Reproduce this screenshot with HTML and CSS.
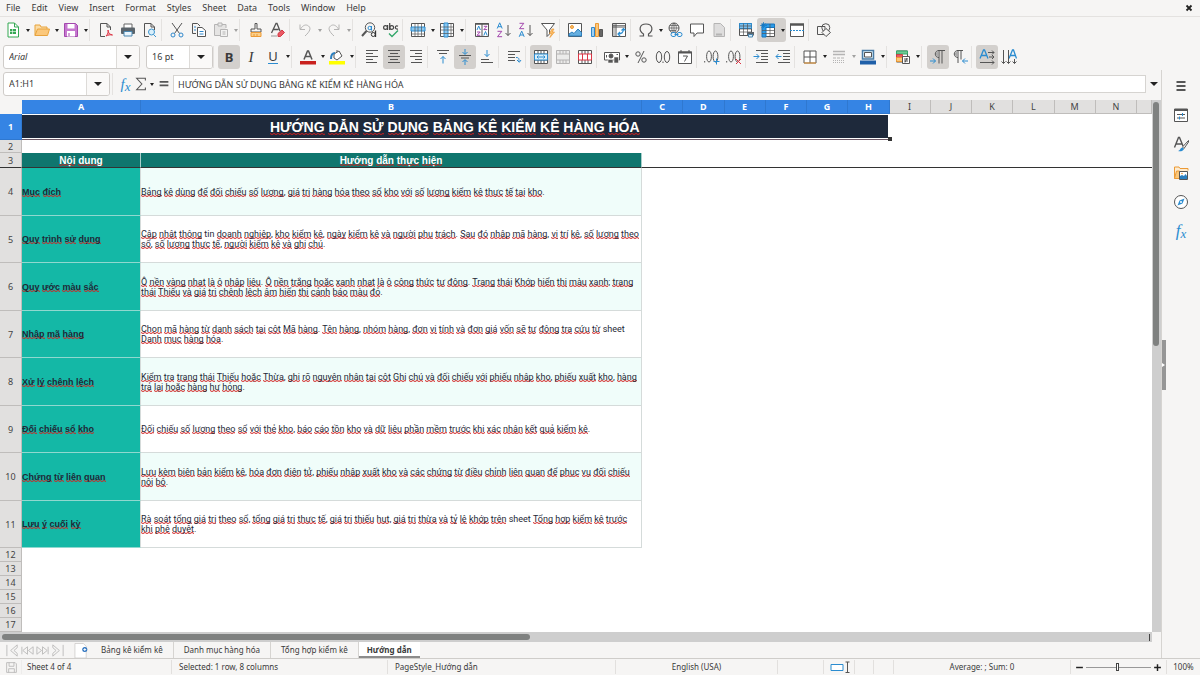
FILE: index.html
```html
<!DOCTYPE html>
<html lang="vi">
<head>
<meta charset="utf-8">
<title>Bảng kê kiểm kê hàng hóa</title>
<link rel="stylesheet" href="styles.css">
</head>
<body>
<header class="menubar">
  <nav class="menus">
    <button>File</button><button>Edit</button><button>View</button><button>Insert</button><button>Format</button><button>Styles</button><button>Sheet</button><button>Data</button><button>Tools</button><button>Window</button><button>Help</button>
  </nav>
  <button class="close" aria-label="Close document"><svg viewBox="0 0 8 8"><path d="M1.5 1.5l5 5M6.5 1.5l-5 5" stroke="#222" stroke-width="1.8"/></svg></button>
</header>

<div class="toolbar" role="toolbar" aria-label="Standard">
  <button class="tool" aria-label="New"><svg viewBox="0 0 16 16"><path d="M3 1h6.500l4 4v10H3z" fill="#fff" stroke="#35a853"/><path d="M9.500 1v4h4" stroke="#35a853"/><path d="M5 7h6v5H5z" fill="#35a853" stroke="none"/><path d="M5 9.500h6M7.500 7v5" stroke="#fff" stroke-width=".6"/></svg></button><button class="arrow" aria-label="New options"></button>
  <button class="tool" aria-label="Open"><svg viewBox="0 0 16 16"><path d="M1 13.500V3h5l1 2h6v2" fill="#fbdca5" stroke="#e8a33d"/><path d="M1 13.500L3.500 7h12l-2 6.500z" fill="#fbc87c" stroke="#e8a33d"/></svg></button><button class="arrow" aria-label="Open options"></button>
  <button class="tool" aria-label="Save"><svg viewBox="0 0 16 16"><path d="M1.500 1.500h11l2 2v11h-13z" fill="#c678cf" stroke="#a347ad"/><path d="M4.500 2h7v4.500h-7zM4 9h8v5.500H4z" fill="#fff" stroke="none"/><path d="M6 11v3" stroke="#a347ad"/></svg></button><button class="arrow" aria-label="Save options"></button>
  <span class="sep"></span>
  <button class="tool" aria-label="Export as PDF"><svg viewBox="0 0 16 16"><path d="M7 14.500H2.500v-13H9l3.500 3.500v3M9 1.500V5h3.500"/><path d="M8 14c2-2 2.500-4 2-6 0 3 2 4.500 4.500 5-2-.5-4.500 0-6.500 1z" stroke="#dc3545" fill="#f7b0b5"/></svg></button>
  <button class="tool" aria-label="Print"><svg viewBox="0 0 16 16"><path d="M4 6V2h8v4" fill="#fff" stroke="#666"/><rect x="1" y="5.500" width="14" height="6.500" rx="1" fill="#5b646b" stroke="none"/><path d="M4 9.500h8V14H4z" fill="#eaf5fd" stroke="#4b87b0"/></svg></button>
  <button class="tool" aria-label="Print preview"><svg viewBox="0 0 16 16"><path d="M7 14.500H2.500v-13H9l3.500 3.500v3M9 1.500V5h3.500"/><circle cx="9.500" cy="10" r="3" fill="#d9effb" stroke="#3d95cf"/><path d="M11.500 12.500l2.500 2.500" stroke="#3d95cf"/></svg></button>
  <span class="sep"></span>
  <button class="tool" aria-label="Cut"><svg viewBox="0 0 16 16"><path d="M3 1l7.500 10.500M13 1L5.500 11.500"/><circle cx="4" cy="13" r="2" stroke="#3088cc"/><circle cx="12" cy="13" r="2" stroke="#3088cc"/></svg></button>
  <button class="tool" aria-label="Copy"><svg viewBox="0 0 16 16"><path d="M5 11.500H1.500v-10h5L9 4"/><path d="M6.500 5.500h4.500l3.500 3v6h-8z" fill="#fff"/><path d="M3 5h2M3 8h2M8.500 9.500h4M8.500 12h4" stroke="#3088cc"/></svg></button>
  <button class="tool faded" aria-label="Paste"><svg viewBox="0 0 16 16"><path d="M7 13.500H1.500v-11H13V6" fill="#ccc"/><path d="M5 1h4v3H5z" fill="#ddd"/><path d="M7.500 7.500h7v7h-7zM9.500 10h3M9.500 12h3" fill="#eee"/></svg></button><button class="arrow faded" aria-label="Paste options"></button>
  <span class="sep"></span>
  <button class="tool" aria-label="Clone formatting"><svg viewBox="0 0 16 16"><path d="M7 1.500h2V7h4v3H3V7h4z"/><path d="M3 10.500h10v4H3z" fill="#fbd08c" stroke="#ec9a35"/><path d="M6 12v2M9 12v2" stroke="#ec9a35"/></svg></button>
  <button class="tool" aria-label="Clear formatting"><svg viewBox="0 0 16 16"><path d="M1.500 11L6 1.500h1L10 9M3.500 7.500h5" stroke-width="1.300"/><path d="M8 11.500L12 8l2.500 2.500-4 4H8z" fill="#ea5964" stroke="#d43a46"/><path d="M1 14h6" stroke="#999"/></svg></button>
  <span class="sep"></span>
  <button class="tool faded" aria-label="Undo"><svg viewBox="0 0 16 16"><path d="M3 2.500v5h5M3.500 7C6 3 9 2 11.500 4s2 5-3.500 10"/></svg></button><button class="arrow faded" aria-label="Undo history"></button>
  <button class="tool faded" aria-label="Redo"><svg viewBox="0 0 16 16"><path d="M13 2.500v5H8M12.500 7C10 3 7 2 4.500 4s-2 5 3.500 10"/></svg></button><button class="arrow faded" aria-label="Redo history"></button>
  <span class="sep"></span>
  <button class="tool" aria-label="Find and replace"><svg viewBox="0 0 16 16"><circle cx="9" cy="5.500" r="4.700"/><path d="M5.500 9L1 14" stroke-width="2"/><circle cx="8.700" cy="6" r="1.700" stroke="#2b8cd0"/><path d="M10.500 4v4.500" stroke="#2b8cd0"/><circle cx="12.300" cy="12.500" r="2" stroke="#333" fill="#f6f5f4"/><path d="M14.500 8.500V15" stroke="#333" stroke-width="1.300"/></svg></button>
  <button class="tool" aria-label="Spelling"><svg viewBox="0 0 16 16"><g stroke="#444" stroke-width="1.200"><circle cx="2.500" cy="5.500" r="1.900"/><path d="M4.600 3v5M6.700 1v7M15 4.200c-3-1.600-4 3.300 0 3"/><circle cx="8.700" cy="5.500" r="1.900"/></g><path d="M6 11.500l3 3L15 8.500" stroke="#35a86b" stroke-width="1.400"/></svg></button>
  <span class="sep"></span>
  <button class="tool" aria-label="Row"><svg viewBox="0 0 16 16"><path d="M1.500 1.500h13v13h-13z" fill="#fff"/><path d="M1 5h14v4H1z" fill="#8cc8f0" stroke="#2b8cd0"/><path d="M5 1.500v13M8 1.500v13M11.500 1.500v13M1 12h14" stroke-width=".7"/></svg></button><button class="arrow" aria-label="Row options"></button>
  <button class="tool" aria-label="Column"><svg viewBox="0 0 16 16"><path d="M1.500 1.500h13v13h-13z" fill="#fff"/><path d="M5 1h4v14H5z" fill="#8cc8f0" stroke="#2b8cd0"/><path d="M1.500 5h13M1.500 8h13M1.500 11.500h13M12 1v14" stroke-width=".7"/></svg></button><button class="arrow" aria-label="Column options"></button>
  <span class="sep"></span>
  <button class="tool" aria-label="Sort"><svg viewBox="0 0 16 16"><path d="M1.500 1.500h13v13h-13zM8 1.500v13" fill="#fff"/><path d="M1 2h14" stroke-width="1.500"/><path d="M3 8l1.700-4 1.700 4M9.800 13.500l1.700-4 1.700 4" stroke="#2b8cd0"/><path d="M3 10h3.200L3 13.300h3.400M9.800 4.300H13L9.800 7.600h3.400" stroke="#a347ad"/></svg></button>
  <button class="tool" aria-label="Sort ascending"><svg viewBox="0 0 16 16"><path d="M1.200 6.500L3.700.8l2.500 5.700M2 4.700h3.400" stroke="#2b8cd0"/><path d="M1.500 9.300h4.300l-4.300 5.400h4.600" stroke="#a347ad"/><path d="M12 3v10.500M9.500 11l2.500 2.500 2.500-2.500"/></svg></button>
  <button class="tool" aria-label="Sort descending"><svg viewBox="0 0 16 16"><path d="M1.200 14.800l2.500-5.700 2.500 5.700M2 13h3.400" stroke="#2b8cd0"/><path d="M1.500 1.300h4.300L1.500 6.700h4.600" stroke="#a347ad"/><path d="M12 3v10.500M9.500 11l2.500 2.500 2.500-2.500"/></svg></button>
  <button class="tool" aria-label="AutoFilter"><svg viewBox="0 0 16 16"><path d="M1.500 1.500h13L9.500 8v4L7 14.500V8z" fill="#fff"/><path d="M12 7l-2.500 4.500h2L10 15.500 14.500 10h-2.300L14 7z" fill="#fbbf6b" stroke="#ec9a35" stroke-width=".7"/></svg></button>
  <span class="sep"></span>
  <button class="tool" aria-label="Insert image"><svg viewBox="0 0 16 16"><path d="M1.500 1.500h13v13h-13z" fill="#fff"/><circle cx="5" cy="5" r="1.500" fill="#fbbf6b" stroke="#ec9a35"/><path d="M2 14v-2l3-2 2 1.500L11 7l3.500 3.500V14z" fill="#65afe0" stroke="#2b7fbf"/></svg></button>
  <button class="tool" aria-label="Insert chart"><svg viewBox="0 0 16 16"><path d="M2.500 5.500h3v9h-3z" fill="#9fd0f2" stroke="#3088cc"/><path d="M6.500 1.500h3v13h-3z" fill="#fbc87c" stroke="#ec9a35"/><path d="M10.500 7.500h3v7h-3z" fill="#666"/></svg></button>
  <button class="tool" aria-label="Insert pivot table"><svg viewBox="0 0 16 16"><path d="M1.500 1.500h13v13h-13zM5 1.500v13M1.500 5h13" fill="#fff"/><path d="M3 2v12M2 3.500h12" stroke-width=".7"/><path d="M12.500 7c0 3-2 5-5.500 5M10.500 8.500l2-2 2 2M9 10l-2 2 2 2" stroke="#2b8cd0" stroke-width="1.200"/></svg></button>
  <span class="sep"></span>
  <button class="tool" aria-label="Special character"><svg viewBox="0 0 16 16"><path d="M1.500 14h4v-2C0 8.500 1.500 2 8 2s8 6.500 2.500 10v2h4" stroke-width="1.200"/></svg></button><button class="arrow" aria-label="Special character options"></button>
  <button class="tool" aria-label="Insert hyperlink"><svg viewBox="0 0 16 16"><circle cx="7" cy="6" r="5"/><path d="M2 6h10M7 1v10M3 3.500h8M3 8.500h6M7 1c-3 3-3 7 0 10M7 1c3 3 3 6 1 9" stroke-width=".7"/><rect x="4" y="10.500" width="5" height="4" rx="2" stroke="#2b8cd0" fill="#f6f5f4"/><rect x="10" y="10.500" width="5" height="4" rx="2" stroke="#2b8cd0" fill="#f6f5f4"/><path d="M7.500 12.500h4" stroke="#2b8cd0"/></svg></button>
  <button class="tool" aria-label="Insert comment"><svg viewBox="0 0 16 16"><path d="M1.500 2h13v9H8l-3 3.500V11H1.500z" fill="#fff"/></svg></button>
  <button class="tool faded" aria-label="Headers and footers"><svg viewBox="0 0 16 16"><path d="M3 1.500h6.500l4 4v9H3z" fill="#bbb"/><path d="M5 12.500h6" stroke-width="2"/></svg></button>
  <span class="sep"></span>
  <button class="tool" aria-label="Define print area"><svg viewBox="0 0 16 16"><path d="M1.500 1.500h12v12h-12z" fill="#fff"/><path d="M1.500 1.500h12v5h-12z" fill="#79bfee" stroke="#2b8cd0"/><path d="M5.500 1.500v12M9.500 1.500v12M1.500 4h12M1.500 7h12M1.500 10h12" stroke-width=".7"/><path d="M9 10h7v3.500H9z" fill="#5b646b" stroke="none"/><path d="M10.500 12.500h4v2.500h-4z" fill="#d9effb" stroke="#4b87b0"/></svg></button>
  <span class="drop on"><button class="tool" aria-label="Freeze rows and columns"><svg viewBox="0 0 16 16"><path d="M2.500 2.500h12v12h-12z" fill="#fff"/><path d="M2 2h12.500v3.500H6V15H2z" fill="#2b9be8" stroke="#1775bd"/><path d="M2 8.500h12.500M2 11.500h12.500M10 2v13" stroke-width=".7"/><path d="M3.500 0v6M0 3.500h7M1.500 1.500l4 4M5.500 1.500l-4 4" stroke="#1775bd" stroke-width=".7"/></svg></button><button class="arrow" aria-label="Freeze options"></button></span>
  <button class="tool" aria-label="Split window"><svg viewBox="0 0 16 16"><path d="M1.500 2v12.500h13V2" fill="#fff"/><path d="M1 2.500h14" stroke-width="2.500"/><path d="M1 8.500h14" stroke="#2b8cd0" stroke-dasharray="2 1"/></svg></button>
  <span class="sep"></span>
  <button class="tool" aria-label="Show draw functions"><svg viewBox="0 0 16 16"><path d="M1.500 4.500h7.500v8H1.500z"/><circle cx="9.800" cy="5.700" r="4"/><path d="M10 6.500l4.500 4-4.500 4-4-4z" fill="#f6f5f4"/></svg></button>
</div>

<div class="toolbar formatting" role="toolbar" aria-label="Formatting">
  <span class="combo font-name"><input value="Arial" aria-label="Font name"><button aria-label="Font list"></button></span>
  <span class="combo font-size"><input value="16 pt" aria-label="Font size"><button aria-label="Size list"></button></span>
  <span class="sep"></span>
  <button class="tool on letter bold" aria-label="Bold">B</button>
  <button class="tool letter italic" aria-label="Italic">I</button>
  <button class="tool letter under" aria-label="Underline"><span>U</span></button><button class="arrow" aria-label="Underline options"></button>
  <span class="sep"></span>
  <button class="tool" aria-label="Font color"><svg viewBox="0 0 16 16"><path d="M4 10.500L7.500 2h1L12 10.500M5.500 7.500h5" stroke-width="1.500"/><path d="M0 12h16v3.500H0z" fill="#c9211e" stroke="none"/></svg></button><button class="arrow" aria-label="Font color options"></button>
  <button class="tool" aria-label="Background color"><svg viewBox="0 0 16 16"><path d="M5 5l5-3 3 5-5 4-3-2zM8 3V1" fill="#fff"/><path d="M2 10C2 5 4 4 6 4" stroke="#2b7fbf" stroke-width="2"/><path d="M0 12h16v3.500H0z" fill="#ff0" stroke="none"/></svg></button><button class="arrow" aria-label="Background color options"></button>
  <span class="sep"></span>
  <button class="tool" aria-label="Align left"><svg viewBox="0 0 16 16"><path d="M2 1.500h12M2 4.500h7M2 7.500h12M2 10.500h7M2 13.500h11"/></svg></button>
  <button class="tool on" aria-label="Align center"><svg viewBox="0 0 16 16"><path d="M2 1.500h12M4 4.500h8M2 7.500h12M4 10.500h8M2 13.500h12"/></svg></button>
  <button class="tool" aria-label="Align right"><svg viewBox="0 0 16 16"><path d="M2 1.500h12M7 4.500h7M2 7.500h12M7 10.500h7M3 13.500h11"/></svg></button>
  <span class="sep"></span>
  <button class="tool" aria-label="Align top"><svg viewBox="0 0 16 16"><path d="M2 1.500h12M4 4.500h8"/><path class="g-line" d="M8 14.500V7.500M5.500 10L8 7.500l2.500 2.500"/></svg></button>
  <button class="tool on" aria-label="Center vertically"><svg viewBox="0 0 16 16"><path d="M2 6.500h12M4 9h8"/><path class="g-line" d="M8 0v5M5.500 3L8 5.500 10.500 3M8 16v-5M5.500 13L8 10.500l2.500 2.500"/></svg></button>
  <button class="tool" aria-label="Align bottom"><svg viewBox="0 0 16 16"><path d="M2 13.500h12M2 10.500h8"/><path class="g-line" d="M8 1v6.500M5.500 5L8 7.500 10.500 5"/></svg></button>
  <span class="sep"></span>
  <button class="tool" aria-label="Wrap text"><svg viewBox="0 0 16 16"><path d="M2 2.500h12M2 5.500h7M2 8.500h7M2 11.500h7"/><path class="g-line" d="M10 8.500c3 0 3 1 3 4M11 11l2.300 2.300L15 11"/></svg></button>
  <span class="sep"></span>
  <button class="tool on" aria-label="Merge and center"><svg viewBox="0 0 16 16"><path d="M1.500 1.500h13v13h-13zM1.500 5h13M1.500 11h13M5 1.500V5M8 1.500V5M11 1.500V5M5 11v3.500M8 11v3.500M11 11v3.500" fill="#fff"/><path d="M1.500 5h13v6h-13zM4 8h8M5.500 6.500L4 8l1.500 1.500M10.500 6.500L12 8l-1.500 1.500" stroke="#2b8cd0" fill="#d9effb"/></svg></button>
  <button class="tool faded" aria-label="Merge cells"><svg viewBox="0 0 16 16"><path d="M1.500 1.500h13v13h-13zM1.500 5h13M1.500 11h13M5 1.500V5M8 1.500V5M11 1.500V5M5 11v3.500M8 11v3.500M11 11v3.500" fill="#ddd"/></svg></button>
  <button class="tool" aria-label="Split cells"><svg viewBox="0 0 16 16"><path d="M1.500 1.500h13v13h-13zM5 1.500V5M8 1.500V5M11 1.500V5M5 11v3.500M8 11v3.500M11 11v3.500" fill="#fff"/><path d="M1.500 5h13v6h-13zM5.500 5v6M10.500 5v6" stroke="#dc3545"/></svg></button>
  <span class="sep"></span>
  <button class="tool" aria-label="Format as currency"><svg viewBox="0 0 16 16"><path d="M.5 3.500h15v7.500H.5z" fill="#fff"/><circle cx="7" cy="7" r="2" fill="#555"/><path d="M2.500 6v2.500M12.500 5.500h1.500"/><path d="M4 10.500h5V14H4zM10 8h4.500v6H10z" fill="#555" stroke="#f6f5f4" stroke-width=".6"/></svg></button><button class="arrow" aria-label="Currency options"></button>
  <button class="tool" aria-label="Format as percent"><svg viewBox="0 0 16 16"><circle cx="5" cy="5" r="2.200"/><circle cx="11" cy="11" r="2.200"/><path d="M11 2L5 14"/></svg></button>
  <button class="tool" aria-label="Format as number"><svg viewBox="0 0 16 16"><ellipse cx="4" cy="8" rx="2.700" ry="5.500"/><ellipse cx="12" cy="8" rx="2.700" ry="5.500"/><path d="M8 12.500v1.500"/></svg></button>
  <button class="tool" aria-label="Format as date"><svg viewBox="0 0 16 16"><path d="M1.500 3h13v11.500h-13z" fill="#fff"/><path d="M1 3.500h14" stroke-width="2"/><path d="M4 1v3M12 1v3M6 7h4.500L7.500 12.500"/></svg></button>
  <span class="sep"></span>
  <button class="tool" aria-label="Add decimal place"><svg viewBox="0 0 16 16"><path d="M.7 12v1.500"/><ellipse cx="5" cy="7.500" rx="2.400" ry="5.500"/><ellipse cx="11.500" cy="7.500" rx="2.400" ry="5.500"/><path class="g-line" d="M12.500 9.500v6M9.500 12.500h6"/></svg></button>
  <button class="tool" aria-label="Delete decimal place"><svg viewBox="0 0 16 16"><path d="M.7 12v1.500"/><ellipse cx="5" cy="7.500" rx="2.400" ry="5.500"/><ellipse cx="11.500" cy="7.500" rx="2.400" ry="5.500"/><path d="M10 10l5 5M15 10l-5 5" stroke="#dc3545"/></svg></button>
  <span class="sep"></span>
  <button class="tool" aria-label="Increase indent"><svg viewBox="0 0 16 16"><path d="M3 1.500h12M8 4.500h7M8 7.500h7M8 10.500h7M3 13.500h12"/><path class="g-line" d="M.5 7.500H6M3.500 5L6 7.500 3.500 10"/></svg></button>
  <button class="tool" aria-label="Decrease indent"><svg viewBox="0 0 16 16"><path d="M3 1.500h12M8 4.500h7M8 7.500h7M8 10.500h7M3 13.500h12"/><path class="g-line" d="M1 7.500h5.500M3.500 5L1 7.500 3.500 10"/></svg></button>
  <span class="sep"></span>
  <button class="tool" aria-label="Borders"><svg viewBox="0 0 16 16"><path d="M2 2h12v12H2z" fill="#fff"/><path d="M8 2v12M2 8h12" stroke="#555"/><path d="M2 14h12" stroke="#ec9a35"/></svg></button><button class="arrow" aria-label="Border options"></button>
  <button class="tool faded" aria-label="Border style"><svg viewBox="0 0 16 16"><path d="M2 2.500h12M2 5.500h12" stroke-width="1.500"/><path d="M2 9h12" stroke-dasharray="3 1"/><path d="M2 13.500h12M2 11.500h12" stroke-dasharray="1 1"/></svg></button><button class="arrow faded" aria-label="Border style options"></button>
  <button class="tool" aria-label="Border color"><svg viewBox="0 0 16 16"><path d="M2.500 1.500h11v8.500h-11z" fill="#d9effb" stroke="#4a7ca5" stroke-width="1.500"/><path d="M4.500 3.500h7v4.500h-7z" fill="#fff"/><path d="M0 11.500h16v4H0z" fill="#1f5fa8" stroke="none"/></svg></button><button class="arrow" aria-label="Border color options"></button>
  <span class="sep"></span>
  <button class="tool" aria-label="Conditional formatting"><svg viewBox="0 0 16 16"><path d="M1.500 2h11v11h-11z" fill="#fff"/><path d="M1.500 2h11v3h-11z" fill="#71c994" stroke="#35a86b"/><path d="M1.500 5.500h6v3h-6z" fill="#ea5964" stroke="#c74444"/><path d="M1.500 8.500h6v4h-6z" fill="#fbc87c" stroke="#ec9a35"/><path d="M7.500 7.500h7v7h-7zM9 10h4M9 12h4M12 9l-2 4.500" fill="#fff"/></svg></button><button class="arrow" aria-label="Conditional options"></button>
  <span class="sep"></span>
  <button class="tool on" aria-label="Left-to-right"><svg viewBox="0 0 16 16"><path d="M9 8.500c-5 0-5-7 0-7v13M12 1.500v13M8 1.500h7" /><path d="M8.500 2C5 2 5 8 8.500 8z" fill="#aaa" stroke="none"/><path class="g-line" d="M0 12h5.500M3 9.500L5.500 12 3 14.500"/></svg></button>
  <button class="tool" aria-label="Right-to-left"><svg viewBox="0 0 16 16"><path d="M6 8.500c-5 0-5-7 0-7v12.500M9 1.500v9M5 1.500h6"/><path d="M5.500 2C2 2 2 8 5.500 8z" fill="#aaa" stroke="none"/><path class="g-line" d="M16 12h-5.500M13 9.500L10.500 12l2.500 2.500"/></svg></button>
  <span class="sep"></span>
  <button class="tool on" aria-label="Horizontal text"><svg viewBox="0 0 16 16"><path class="g-line" stroke-width="1.300" d="M1 9.500L4.500 1h1L9 9.500M2.500 6.500h5"/><path d="M9 3.500h6M13 1.500l2 2-2 2M10 8h5M13 6l2 2-2 2M1 13.500h14M13 11.500l2 2-2 2"/></svg></button>
  <button class="tool" aria-label="Vertical text"><svg viewBox="0 0 16 16"><path class="g-line" stroke-width="1.300" d="M8 9.500L11.500 1h1L15.500 9.500M9.500 6.500h5"/><path d="M2.500 1v13.500M.5 12.500l2 2 2-2M7.500 1v13.500M5.500 12.500l2 2 2-2M13.500 10v4.500M11.500 12.500l2 2 2-2"/></svg></button>
</div>

<main class="workspace">
  <section class="document">
    <div class="formula-bar">
      <span class="combo name-box"><input value="A1:H1" aria-label="Name box"><button aria-label="Named ranges"></button></span>
      <span class="sep"></span>
      <button class="fx" aria-label="Function wizard">f<sub>x</sub></button>
      <button class="sigma" aria-label="Select function"><svg viewBox="0 0 16 16"><path d="M13 4V1.500H3L9 8l-6 6.500h10V12" stroke-width="1.200"/></svg></button><button class="arrow" aria-label="Function list"></button>
      <button class="equals" aria-label="Formula"><svg viewBox="0 0 16 16"><path d="M3 5.500h10M3 9.500h10" stroke-width="2"/></svg></button>
      <input class="formula" aria-label="Input line" value="HƯỚNG DẪN SỬ DỤNG BẢNG KÊ KIỂM KÊ HÀNG HÓA">
      <button class="expand" aria-label="Expand formula bar"></button>
    </div>

    <div class="canvas">
      <div class="viewport">
        <table class="sheet">
          <colgroup><col class="c-row"><col class="c-a"><col class="c-b"><col><col><col><col><col><col><col><col><col><col><col><col><col class="c-last"></colgroup>
          <thead>
            <tr><th class="corner"></th><th class="sel">A</th><th class="sel">B</th><th class="sel">C</th><th class="sel">D</th><th class="sel">E</th><th class="sel">F</th><th class="sel">G</th><th class="sel">H</th><th>I</th><th>J</th><th>K</th><th>L</th><th>M</th><th>N</th><th></th></tr>
          </thead>
          <tbody>
            <tr class="r-title"><th class="sel">1</th><td colspan="8" class="title"><div class="spell">HƯỚNG DẪN SỬ DỤNG BẢNG KÊ KIỂM KÊ HÀNG HÓA</div><i class="handle"></i></td><td colspan="7"></td></tr>
            <tr class="r-gap"><th>2</th><td colspan="15"></td></tr>
            <tr class="r-head"><th>3</th><td class="head spell">Nội dung</td><td class="head spell">Hướng dẫn thực hiện</td><td colspan="13"></td></tr>
            <tr class="data"><th>4</th><td class="topic spell">Mục đích</td><td class="guide spell">Bảng kê dùng để đối chiếu số lượng, giá trị hàng hóa theo sổ kho với số lượng kiểm kê thực tế tại kho.</td><td colspan="13"></td></tr>
            <tr class="data"><th>5</th><td class="topic spell">Quy trình sử dụng</td><td class="guide spell">Cập nhật thông tin doanh nghiệp, kho kiểm kê, ngày kiểm kê và người phụ trách. Sau đó nhập mã hàng, vị trí kệ, số lượng theo sổ, số lượng thực tế, người kiểm kê và ghi chú.</td><td colspan="13"></td></tr>
            <tr class="data"><th>6</th><td class="topic spell">Quy ước màu sắc</td><td class="guide spell">Ô nền vàng nhạt là ô nhập liệu. Ô nền trắng hoặc xanh nhạt là ô công thức tự động. Trạng thái Khớp hiển thị màu xanh; trạng thái Thiếu và giá trị chênh lệch âm hiển thị cảnh báo màu đỏ.</td><td colspan="13"></td></tr>
            <tr class="data"><th>7</th><td class="topic spell">Nhập mã hàng</td><td class="guide spell">Chọn mã hàng từ danh sách tại cột Mã hàng. Tên hàng, nhóm hàng, đơn vị tính và đơn giá vốn sẽ tự động tra cứu từ sheet Danh mục hàng hóa.</td><td colspan="13"></td></tr>
            <tr class="data"><th>8</th><td class="topic spell">Xử lý chênh lệch</td><td class="guide spell">Kiểm tra trạng thái Thiếu hoặc Thừa, ghi rõ nguyên nhân tại cột Ghi chú và đối chiếu với phiếu nhập kho, phiếu xuất kho, hàng trả lại hoặc hàng hư hỏng.</td><td colspan="13"></td></tr>
            <tr class="data"><th>9</th><td class="topic spell">Đối chiếu sổ kho</td><td class="guide spell">Đối chiếu số lượng theo sổ với thẻ kho, báo cáo tồn kho và dữ liệu phần mềm trước khi xác nhận kết quả kiểm kê.</td><td colspan="13"></td></tr>
            <tr class="data"><th>10</th><td class="topic spell">Chứng từ liên quan</td><td class="guide spell">Lưu kèm biên bản kiểm kê, hóa đơn điện tử, phiếu nhập xuất kho và các chứng từ điều chỉnh liên quan để phục vụ đối chiếu nội bộ.</td><td colspan="13"></td></tr>
            <tr class="data"><th>11</th><td class="topic spell">Lưu ý cuối kỳ</td><td class="guide spell">Rà soát tổng giá trị theo sổ, tổng giá trị thực tế, giá trị thiếu hụt, giá trị thừa và tỷ lệ khớp trên sheet Tổng hợp kiểm kê trước khi phê duyệt.</td><td colspan="13"></td></tr>
            <tr class="blank"><th>12</th><td colspan="15"></td></tr>
            <tr class="blank"><th>13</th><td colspan="15"></td></tr>
            <tr class="blank"><th>14</th><td colspan="15"></td></tr>
            <tr class="blank"><th>15</th><td colspan="15"></td></tr>
            <tr class="blank"><th>16</th><td colspan="15"></td></tr>
            <tr class="blank"><th>17</th><td colspan="15"></td></tr>
          </tbody>
        </table>
      </div>
      <div class="vscroll"><div class="thumb"></div></div>
    </div>

    <div class="hscroll"><div class="track"><div class="thumb"></div><i class="split"></i></div></div>

    <div class="tabs">
      <div class="tab-nav">
        <button aria-label="First sheet"><svg viewBox="0 0 16 16"><path d="M2 2v12M13 2L6 8l7 6v-3L9.500 8 13 5z"/></svg></button><button aria-label="Previous sheet"><svg viewBox="0 0 16 16"><path d="M2 4v8M8 4L3 8l5 4zM14 4L9 8l5 4z"/></svg></button><button aria-label="Next sheet"><svg viewBox="0 0 16 16"><path d="M14 4v8M8 4l5 4-5 4zM2 4l5 4-5 4z"/></svg></button><button aria-label="Last sheet"><svg viewBox="0 0 16 16"><path d="M14 2v12M3 2l7 6-7 6v-3L6.500 8 3 5z"/></svg></button>
      </div>
      <button class="add" aria-label="Add sheet"><svg viewBox="0 0 16 16"><path d="M1 .5h9l3 3V16H1z" fill="#fff" stroke="#c4c2c0" stroke-width=".7"/><circle cx="11.500" cy="7" r="2.700" fill="#2e74c0" stroke="none"/><path d="M11.500 5.500v3M10 7h3" stroke="#fff"/></svg></button>
      <button class="tab">Bảng kê kiểm kê</button>
      <button class="tab">Danh mục hàng hóa</button>
      <button class="tab">Tổng hợp kiểm kê</button>
      <button class="tab active">Hướng dẫn</button>
    </div>
  </section>

  <aside class="sidebar">
    <button aria-label="Sidebar settings"><svg viewBox="0 0 16 16"><path d="M3.500 4h9M3.500 8h9M3.500 12h9" stroke="#222" stroke-width="1.500"/></svg></button>
    <button aria-label="Properties"><svg viewBox="0 0 16 16"><path d="M1.500 2h13v12.500h-13z" fill="#fff"/><path d="M1 3h14" stroke-width="2"/><path d="M4 7.500h8M4 11h8"/><path class="g-line" d="M9.500 6v3M6.500 9.500v3"/></svg></button>
    <button aria-label="Styles"><svg viewBox="0 0 16 16"><path d="M1.500 11.500L5.500 1.500h1L10 10M3 8h6" stroke-width="1.400"/><path d="M15.500 4.500L9.500 11l1.500 1.500L15.500 6z" fill="#fff"/><path d="M5 15c2 0 2-3 4.500-3.500l1.500 1.500C10 15.500 7 15.500 5 15z" fill="#2b8cd0" stroke="none"/></svg></button>
    <button aria-label="Gallery"><svg viewBox="0 0 16 16"><path d="M1.500 13.500V2H6l1 1.500h8v2" fill="#fdebcf" stroke="#ec9a35"/><path d="M1.500 13.500L3.500 6h3v7.500z" fill="#fbc87c" stroke="#ec9a35"/><path d="M6.500 6.500h8v8h-8z" fill="#fff"/><path d="M7 14v-3l2-1 2 1 1.500-2L14 11v3z" fill="#2b7fbf" stroke="none"/><circle cx="9" cy="8.500" r=".8" fill="#ec9a35" stroke="none"/></svg></button>
    <button aria-label="Navigator"><svg viewBox="0 0 16 16"><circle cx="8" cy="8" r="6.500" fill="#fff"/><path d="M11.500 4.500L9.500 9.500l-5 2 2-5z" fill="#2b8cd0" stroke="none"/><circle cx="8" cy="8" r="1" fill="#fff" stroke="none"/></svg></button>
    <button class="fx" aria-label="Functions">f<sub>x</sub></button>
    <i class="grip"></i>
  </aside>
</main>

<footer class="status">
  <span class="cell icon faded"><svg viewBox="0 0 16 16"><path d="M2 2h10.500L14 3.500V14H2zM5 2v4.500h6V2M4.500 14V9.500h7V14"/></svg></span>
  <span class="cell">Sheet 4 of 4</span>
  <span class="cell pad">Selected: 1 row, 8 columns</span>
  <span class="cell pad">PageStyle_Hướng dẫn</span>
  <span class="cell mid">English (USA)</span>
  <span class="cell"></span>
  <span class="cell mode"><svg class="select-mode" viewBox="0 0 20 12"><path d="M1 3.500h12v6H1z" fill="#fff" stroke="#2b8cd0"/><path d="M15.500 1h4M15.500 11.500h4M17.500 1v10.500"/></svg></span>
  <span class="cell"></span>
  <span class="cell"></span>
  <span class="cell mid">Average: ; Sum: 0</span>
  <span class="cell zoom"><button aria-label="Zoom out"><svg viewBox="0 0 8 8"><path d="M1 4h6" stroke="#222" stroke-width="1.300"/></svg></button><input type="range" min="0" max="100" value="49" aria-label="Zoom"><button aria-label="Zoom in"><svg viewBox="0 0 8 8"><path d="M1 4h6M4 1v6" stroke="#222" stroke-width="1.300"/></svg></button></span>
  <span class="cell mid">100%</span>
</footer>
<script src="spelling.js"></script>
</body>
</html>
```
FILE: styles.css
```css
* { box-sizing: border-box; }
:root {
  --chrome: #f6f5f4;
  --line: #d6d4d1;
  --ink: #3a3a3a;
  --blue: #3584e4;
  --ui: "Noto Sans", sans-serif;
}
body {
  margin: 0;
  height: 100vh;
  display: flex;
  flex-direction: column;
  overflow: hidden;
  background: var(--chrome);
  color: var(--ink);
  font: 9px/12px var(--ui);
}
button, input { font: inherit; color: inherit; margin: 0; padding: 0; border: 0; background: none; border-radius: 0; outline: 0; }
svg { display: block; fill: none; stroke: #555; }
svg .g-line { stroke: #2b8cd0; }
.faded { opacity: 0.4; }

.menubar { display: flex; align-items: center; justify-content: space-between; height: 17px; flex: none; border-bottom: 1px solid #e4e2e0; padding: 0 7px 0 6px; }
.menus { display: flex; gap: 11px; }
.close svg { width: 8px; height: 8px; }

.toolbar { display: flex; align-items: center; height: 26px; flex: none; padding-left: 2px; }
.formatting { height: 27px; padding-left: 3px; }
.tool { width: 22px; height: 24px; flex: none; display: flex; align-items: center; justify-content: center; border-radius: 3px; }
.tool svg { width: 16px; height: 16px; }
.on { background: #d3d0cd; border-radius: 3px; }
.drop { display: flex; }
.arrow { width: 7px; height: 24px; flex: none; display: flex; align-items: center; justify-content: center; }
.arrow::before, .combo button::before, .expand::before { content: ""; border: 2px solid transparent; border-top: 3px solid #222; border-bottom: 0; }
.sep { width: 5px; height: 22px; flex: none; border-left: 1px solid #e4e2e0; }
.arrow + .sep { width: 6px; }
.letter { font-size: 13px; line-height: 16px; }
.bold { font-weight: 700; }
.italic { font-family: "Liberation Serif", serif; font-style: italic; font-size: 15px; }
.under span { border-bottom: 1px solid #2b8cd0; line-height: 14px; }

.combo { display: flex; height: 24px; flex: none; border: 1px solid #cfccc9; border-radius: 3px; background: #fff; overflow: hidden; }
.combo input { flex: 1; min-width: 0; padding-left: 5px; }
.combo button { width: 23px; background: #faf9f8; border-left: 1px solid #dddbd8; display: flex; align-items: center; justify-content: center; }
.combo button::before, .expand::before { border-width: 4px 4px 0; }
.font-name { width: 137px; margin-right: 6px; }
.font-name input { font-style: italic; }
.font-size { width: 67px; }
.name-box { width: 107px; margin-right: 2px; }

.workspace { flex: 1; min-height: 0; display: flex; }
.document { flex: 1; min-width: 0; display: flex; flex-direction: column; }
.formula-bar { display: flex; align-items: center; height: 30px; flex: none; padding: 0 0 2px 3px; }
.fx { font: italic 15px/16px "Liberation Serif", serif; color: #2b8cd0; width: 17px; }
.fx sub { font-size: 13px; vertical-align: -2px; line-height: 0; }
.sigma svg { width: 14px; height: 14px; }
.equals { margin: 0 1px 0 2px; }
.equals svg { width: 14px; height: 14px; }
.formula { flex: 1; height: 18px; margin-left: 1px; border: 1px solid var(--line); background: #fff; padding-left: 4px; }
.expand { width: 15px; height: 18px; display: flex; align-items: center; justify-content: center; }

.canvas { flex: 1; min-height: 0; display: flex; background: #fff; }
.viewport { flex: 1; min-width: 0; overflow: hidden; }
.sheet { width: 100%; table-layout: fixed; border-collapse: separate; border-spacing: 0; }
.c-row { width: 22px; }
.c-a { width: 119px; }
.c-b { width: 501px; }
.c-last { width: 15px; }
.sheet th, .sheet td { padding: 0; overflow: hidden; }
.sheet th { background: #e1e0df; border-right: 1px solid #bfbdbb; border-bottom: 1px solid #bfbdbb; font-weight: 400; color: #444; line-height: 11px; }
.sheet thead th { height: 14px; }
.sheet .corner { background: var(--chrome); border-color: var(--chrome); }
.sheet th.sel { background: var(--blue); border-color: #2f78d0; color: #fff; font-weight: 700; }
.r-title { height: 26px; }
.r-gap { height: 13px; }
.r-head { height: 15px; }
.r-head th, .r-head td { border-bottom: 1px solid #333; }
.sheet .r-head th { border-bottom-color: #333; }
.sheet .title { position: relative; overflow: visible; border-bottom: 1px solid #6b5663; padding: 1px 2px 1px 0; }
.title div { height: 23px; background: #1e293b; color: #fff; font: 700 14px/24px "Liberation Sans", sans-serif; text-align: center; }
.handle { position: absolute; right: -2px; bottom: -2px; width: 4px; height: 4px; background: #333; }
.head { background: #0f766e; color: #fff; font: 700 10px/13px "Liberation Sans", sans-serif; text-align: center; border-right: 1px solid #a9cfcb; }
.data { height: 48px; }
.data:nth-child(odd) { height: 47px; }
.topic, .guide { border-right: 1px solid #d5dbda; border-bottom: 1px solid #d5dbda; color: #1f2937; }
.topic { background: #14b8a6; font: 700 9px/10px "Liberation Sans", sans-serif; border-bottom-color: #8fd8cf; }
.guide { font: 9px/10px Roboto, "Liberation Sans", sans-serif; }
.data:nth-child(even) .guide { background: #f0fdfa; }
.blank { height: 14px; }
.misspelled { background: url("data:image/svg+xml,%3Csvg xmlns='http://www.w3.org/2000/svg' width='4' height='2'%3E%3Cpath d='M0 .5L2 1.500L4 .5' fill='none' stroke='%23d02020'/%3E%3C/svg%3E") left bottom / 4px 2px repeat-x; }

.vscroll { width: 9px; flex: none; background: #cecece; padding: 2px 2px 0 1px; }
.vscroll .thumb { height: 46%; border-radius: 3px; background: #7f8180; }
.hscroll { height: 10px; flex: none; padding-right: 9px; }
.track { height: 10px; display: flex; align-items: center; justify-content: space-between; background: #cecece; padding: 0 2px; }
.hscroll .thumb { width: 46%; height: 6px; border-radius: 3px; background: #7f8180; }
.split { width: 1px; height: 7px; background: #444; }

.tabs { display: flex; align-items: stretch; height: 16px; flex: none; padding-left: 5px; font-size: 8px; }
.tab-nav { display: flex; width: 69px; opacity: 0.35; }
.tab-nav button { width: 15px; }
.tab-nav svg { width: 15px; height: 15px; }
.add { width: 17px; }
.add svg { width: 15px; height: 15px; }
.tab { padding: 0 10px; border-right: 1px solid var(--line); line-height: 13px; padding-bottom: 1px; }
.active { background: #fff; border-right: 0; border-bottom: 2px solid #8c8c8c; font-weight: 700; padding: 0 8px; }

.sidebar { position: relative; width: 39px; flex: none; border-left: 1px solid var(--line); display: flex; flex-direction: column; align-items: center; gap: 13px; padding-top: 8px; }
.sidebar button { width: 20px; height: 16px; display: flex; align-items: center; justify-content: center; }
.sidebar svg { width: 16px; height: 16px; }
.sidebar .fx { display: block; font-size: 17px; }
.grip { position: absolute; left: 0; top: 46%; width: 4px; height: 50px; background: #969696; }
.grip::before { content: ""; position: absolute; left: 0; top: 23px; border: 2px solid transparent; border-left: 3px solid #fff; border-right: 0; }

.status { display: grid; grid-template-columns: 22px 150fr 216fr 228fr 162fr 46px 31px 19px 20px 177fr 96px 33px; height: 17px; flex: none; border-top: 1px solid #cfcdca; font-size: 8px; }
.cell { display: flex; align-items: center; margin: 1px 0; border-right: 1px solid #e2e0de; padding-left: 5px; white-space: nowrap; }
.cell:last-child { border-right: 0; }
.pad { padding-left: 7px; }
.mid { justify-content: center; padding-left: 0; }
.icon svg { width: 13px; height: 13px; }
.mode { padding-left: 6px; }
.select-mode { width: 20px; height: 12px; }
.zoom { padding: 0 4px; gap: 2px; }
.zoom svg { width: 9px; height: 9px; }
.zoom input { appearance: none; flex: 1; min-width: 0; height: 10px; background: linear-gradient(#999, #999) center / 100% 1px no-repeat; }
.zoom input::-webkit-slider-thumb { appearance: none; width: 3px; height: 8px; border: 1px solid #444; background: #fff; }
```
FILE: spelling.js
```js
// Marks every word that is missing from the English (USA) dictionary.
const dictionary = new Set(["sheet", "tin"]);

document.querySelectorAll(".spell").forEach((cell) => {
  const parts = cell.textContent.split(/([\p{L}\p{M}]+)/u);
  cell.textContent = "";
  parts.forEach((part) => {
    if (/^[\p{L}\p{M}]+$/u.test(part) && !dictionary.has(part)) {
      const mark = document.createElement("span");
      mark.className = "misspelled";
      mark.textContent = part;
      cell.append(mark);
    } else {
      cell.append(part);
    }
  });
});
```
